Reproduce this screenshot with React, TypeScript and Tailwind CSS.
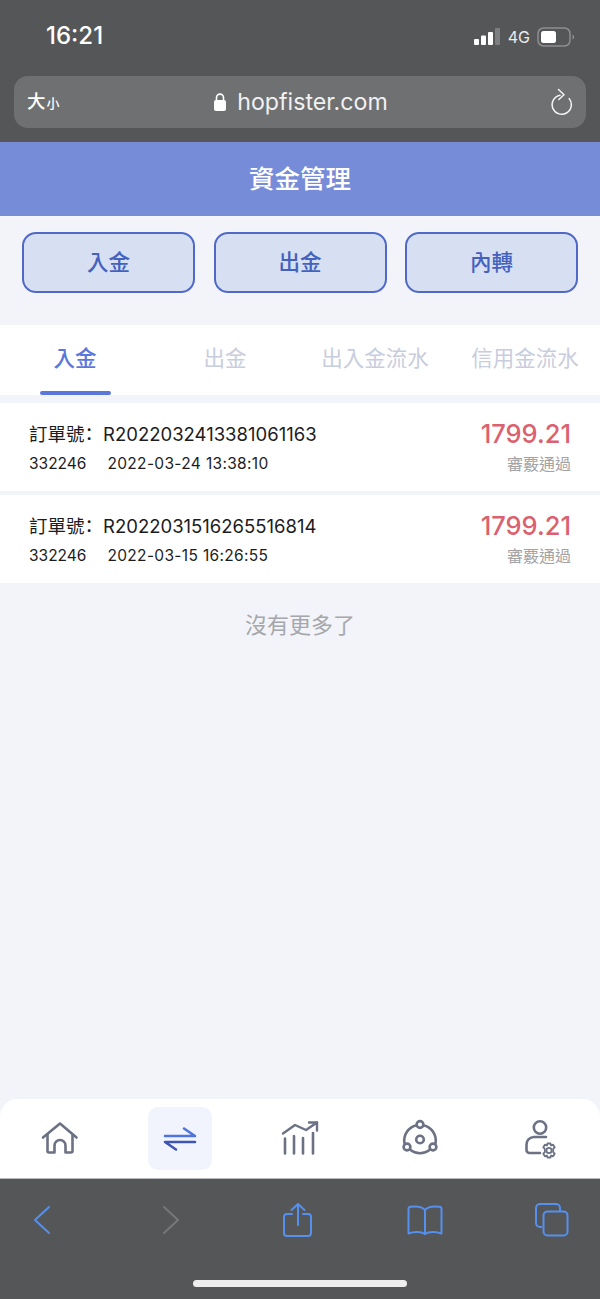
const font = "font-['Inter','Noto_Sans_CJK_TC',sans-serif]";

const orders = [
  { no: "R2022032413381061163", time: "2022-03-24 13:38:10" },
  { no: "R2022031516265516814", time: "2022-03-15 16:26:55" },
];

function StatusBar() {
  return (
    <div className="flex h-[76px] items-start justify-between pl-[46px] pr-[25px] pt-[22px]">
      <span className="text-[24px] font-medium leading-[28px] text-white">16:21</span>
      <div className="flex items-center pt-[5px]">
        <svg width="26" height="18" viewBox="0 0 26 18" fill="#fff">
          <rect x="0" y="11" width="5" height="6" rx="1" />
          <rect x="7" y="7.5" width="5" height="9.5" rx="1" />
          <rect x="14" y="4" width="5" height="13" rx="1" />
          <rect x="21" y="0" width="5" height="17" rx="1" fill="#7d7e80" />
        </svg>
        <span className="ml-[8px] text-[16px] leading-[20px] text-[#ececec]">4G</span>
        <svg className="ml-[7px]" width="38" height="20" viewBox="0 0 38 20">
          <rect x="1" y="1" width="32" height="18" rx="5.500" fill="none" stroke="#8e8f91" strokeWidth="1.5" />
          <rect x="4" y="4" width="15" height="12" rx="2.500" fill="#fff" />
          <path d="M35.500 7.500c1.200.5 1.600 1.400 1.600 2.500s-.4 2-1.600 2.500z" fill="#8e8f91" />
        </svg>
      </div>
    </div>
  );
}

function UrlBar() {
  return (
    <div className="mx-[14px] flex h-[52px] items-center rounded-[14px] bg-[#6f7072] pl-[13px] pr-[12px]">
      <div className="flex flex-1 items-baseline font-medium text-white">
        <span className="text-[18.5px] leading-[24px]">大</span>
        <span className="ml-[1px] text-[13px] leading-[24px]">小</span>
      </div>
      <div className="flex items-center text-[#f1f1f1]">
        <svg width="14" height="20" viewBox="0 0 14 20" fill="#fff">
          <path d="M3.500 9V5.600a3.500 3.500 0 0 1 7 0V9" fill="none" stroke="#fff" strokeWidth="1.600" />
          <rect x="1" y="8" width="12" height="11" rx="2" />
        </svg>
        <span className="ml-[10px] text-[23.2px] leading-[30px]">hopfister.com</span>
      </div>
      <div className="flex flex-1 justify-end">
        <svg width="24" height="28" viewBox="0 0 24 28" fill="none" stroke="#f5f5f5" strokeWidth="1.500" strokeLinecap="round" strokeLinejoin="round">
          <path d="M10 7.200a9.600 9.600 0 1 0 9.200 3.400" />
          <path d="M8.500 1.500 14 6.800 8.800 11.500" />
        </svg>
      </div>
    </div>
  );
}

function ActionButton({ label }: { label: string }) {
  return (
    <button className="flex h-[61px] w-[173px] items-center justify-center rounded-[14px] border-2 border-[#5069c6] bg-[#d7e0f3] text-[21.5px] font-medium text-[#4461bd]">
      {label}
    </button>
  );
}

function Tab({ label, active }: { label: string; active?: boolean }) {
  return (
    <div className="flex flex-1 flex-col items-center">
      <span className={`mt-[17px] h-[32px] text-[21.5px] leading-[32px] ${active ? "font-medium text-[#5a78dc]" : "text-[#c8cddd]"}`}>
        {label}
      </span>
      {active && <div className="mt-[17px] h-[4px] w-[71px] rounded-[2px] bg-[#5a78dc]" />}
    </div>
  );
}

function OrderRow({ no, time }: { no: string; time: string }) {
  return (
    <div className="flex h-[88px] items-start justify-between bg-white pl-[29px] pr-[29px]">
      <div className="pt-[16px] text-[#1c1c1e]">
        <div className="h-[28px] text-[18.5px] leading-[28px]">
          訂單號
          <span className="inline-block -translate-y-[1px] font-['Noto_Sans_CJK_SC',sans-serif]">：</span>
          {no}
        </div>
        <div className="mt-[5px] flex h-[24px] text-[15.5px] leading-[24px]">
          <span>332246</span>
          <span className="ml-[21px] tracking-[0.33px]">{time}</span>
        </div>
      </div>
      <div className="flex flex-col items-end pt-[14px]">
        <span className="h-[34px] text-[25.5px] font-medium leading-[34px] text-[#dc6170]">1799.21</span>
        <span className="mt-[1px] text-[16px] leading-[24px] text-[#a3a3a5]">審覈通過</span>
      </div>
    </div>
  );
}

function NavIcon({ children }: { children: React.ReactNode }) {
  return (
    <svg width="40" height="40" viewBox="0 0 40 40" fill="none" stroke="#6c7183" strokeWidth="2.600" strokeLinecap="round" strokeLinejoin="round">
      {children}
    </svg>
  );
}

function BottomNav() {
  return (
    <div className="flex h-[79px] items-center rounded-t-[18px] bg-white pl-[40px] pr-[40px]">
      <NavIcon>
        <path d="M3 18.500 20 4.500l16.500 14" />
        <path d="M7.500 15.500v16.500a1.500 1.500 0 0 0 1.500 1.500h5.500v-7a5.300 5.300 0 0 1 11 0v7H31a1.500 1.500 0 0 0 1.500-1.500V15.500" />
      </NavIcon>
      <div className="ml-[68px] flex h-[63px] w-[64px] items-center justify-center rounded-[10px] bg-[#f2f4fd]">
        <svg width="34" height="30" viewBox="0 0 34 30" fill="none" strokeWidth="2.600" strokeLinecap="round" strokeLinejoin="round">
          <path d="M2 12h30L21 4.500" stroke="#4f74dc" />
          <path d="M32 18H2l11 7.500" stroke="#3e55b5" />
        </svg>
      </div>
      <div className="ml-[68px]">
        <NavIcon>
          <path d="M5 19.500v15M14 17v17.500M23 19v15.500M33 14v20.500" />
          <path d="M3 14.500 15 6l11 5L37 3.500" strokeWidth="2.400" />
          <path d="M29 3.500h8v8" strokeWidth="2.400" />
        </NavIcon>
      </div>
      <div className="ml-[80px]">
        <NavIcon>
          <circle cx="20" cy="20.500" r="3.800" />
          <circle cx="20" cy="5.500" r="3.400" />
          <circle cx="7" cy="28" r="3.400" />
          <circle cx="33" cy="28" r="3.400" />
          <path d="M16.800 6.300A15.600 15.600 0 0 0 4.600 25M23.200 6.300A15.600 15.600 0 0 1 35.400 25M10 30.600a15.600 15.600 0 0 0 20 0" />
        </NavIcon>
      </div>
      <div className="ml-auto">
        <svg width="36" height="44" viewBox="0 0 36 44" fill="none" stroke="#6c7183" strokeWidth="2.600" strokeLinecap="round" strokeLinejoin="round">
          <circle cx="16" cy="10.500" r="6.200" />
          <path d="M22 20H10a7.500 7.500 0 0 0-7.500 7.500v5.500a3 3 0 0 0 3 3H16" />
          <g strokeWidth="1.800">
            <circle cx="25" cy="33.500" r="2.600" />
            <path d="M23.500 26.500h3l.6 2 2-.8 1.600 2.600-1.500 1.500v3.400l1.500 1.500-1.600 2.600-2-.8-.6 2h-3l-.6-2-2 .8-1.600-2.600 1.500-1.500v-3.400l-1.500-1.500 1.600-2.600 2 .8z" />
          </g>
        </svg>
      </div>
    </div>
  );
}

function SafariBar() {
  return (
    <div className="flex h-[121px] flex-col border-t border-[#b9b9bb] bg-[#555658]">
      <div className="flex h-[80px] items-center pl-[33px] pt-[1px]">
        <svg width="18" height="30" viewBox="0 0 18 30" fill="none" stroke="#5590ee" strokeWidth="2" strokeLinecap="round" strokeLinejoin="round">
          <path d="M16 2 2 15l14 13" />
        </svg>
        <svg className="ml-[111px]" width="18" height="30" viewBox="0 0 18 30" fill="none" stroke="#77787a" strokeWidth="2" strokeLinecap="round" strokeLinejoin="round">
          <path d="M2 2l14 13L2 28" />
        </svg>
        <svg className="ml-[103px]" width="30" height="36" viewBox="0 0 30 36" fill="none" stroke="#5590ee" strokeWidth="2" strokeLinecap="round" strokeLinejoin="round">
          <path d="M9 12H4a3 3 0 0 0-3 3v16a3 3 0 0 0 3 3h21a3 3 0 0 0 3-3V15a3 3 0 0 0-3-3h-5" />
          <path d="M15 23V2M8.500 8 15 2l6.500 6" />
        </svg>
        <svg className="ml-[94px]" width="36" height="32" viewBox="0 0 36 32" fill="none" stroke="#5590ee" strokeWidth="2" strokeLinecap="round" strokeLinejoin="round">
          <path d="M18 6C15 2.500 9 2 3.500 2.800 2 3 1.500 4 1.500 5v24.500C7 27.500 14 27.500 18 30c4-2.500 11-2.500 16.500-.5V5c0-1-.5-2-2-2.200C27 2 21 2.500 18 6z" />
          <path d="M18 6v24" />
        </svg>
        <svg className="ml-[92px]" width="34" height="34" viewBox="0 0 34 34" fill="none" stroke="#5590ee" strokeWidth="2" strokeLinejoin="round">
          <path d="M7 24H5a4 4 0 0 1-4-4V5a4 4 0 0 1 4-4h16a4 4 0 0 1 4 4v3" />
          <rect x="8.500" y="8.500" width="24" height="24" rx="4" />
        </svg>
      </div>
      <div className="mx-auto mt-[21px] h-[7px] w-[214px] rounded-full bg-[#eeeeee]" />
    </div>
  );
}

export default function App() {
  return (
    <div className={`${font} flex h-[1299px] w-[600px] flex-col overflow-hidden bg-[#f2f4f9]`}>
      <div className="h-[142px] bg-[#555658]">
        <StatusBar />
        <UrlBar />
      </div>

      <div className="flex h-[74px] items-center justify-center bg-[#778cd8] text-[25.5px] font-medium text-white">
        資金管理
      </div>

      <div className="flex justify-between px-[22px] pt-[16px]">
        <ActionButton label="入金" />
        <ActionButton label="出金" />
        <ActionButton label="內轉" />
      </div>

      <div className="mt-[32px] flex h-[70px] bg-white">
        <Tab label="入金" active />
        <Tab label="出金" />
        <Tab label="出入金流水" />
        <Tab label="信用金流水" />
      </div>

      <div className="mt-[8px] flex flex-col gap-[4px]">
        {orders.map((o) => (
          <OrderRow key={o.no} no={o.no} time={o.time} />
        ))}
      </div>

      <div className="mt-[26px] text-center text-[22px] leading-[32px] text-[#a6a7ab]">沒有更多了</div>

      <div className="mt-auto">
        <BottomNav />
        <SafariBar />
      </div>
    </div>
  );
}
